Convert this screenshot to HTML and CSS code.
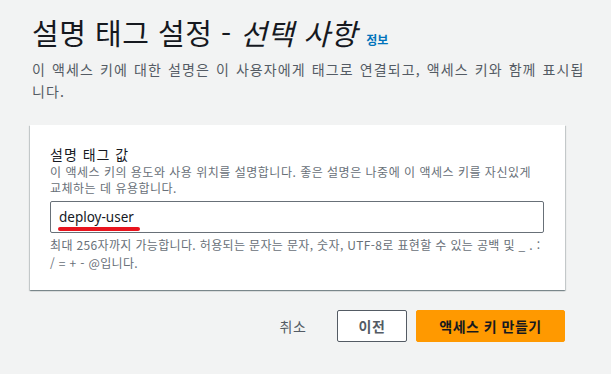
FILE: index.html
```html
<!DOCTYPE html>
<html lang="ko">
<head>
    <meta charset="UTF-8">
    <meta name="viewport" content="width=device-width, initial-scale=1.0">
    <title>설명 태그 설정</title>
    <link rel="stylesheet" href="styles.css">
</head>
<body>
    <div class="page">
        <h1 class="title">설명 태그 설정 - <em>선택 사항</em> <a href="#" class="info">정보</a></h1>
        <p class="intro">이 액세스 키에 대한 설명은 이 사용자에게 태그로 연결되고, 액세스 키와 함께 표시됩니다.</p>

        <div class="card">
            <label class="field-label" for="tag">설명 태그 값</label>
            <p class="field-desc">이 액세스 키의 용도와 사용 위치를 설명합니다. 좋은 설명은 나중에 이 액세스 키를 자신있게 교체하는 데 유용합니다.</p>
            <div class="input-wrap">
                <input id="tag" class="input" type="text" value="deploy-user">
                <span class="mark"></span>
            </div>
            <p class="field-hint">최대 256자까지 가능합니다. 허용되는 문자는 문자, 숫자, UTF-8로 표현할 수 있는 공백 및 _ . : / = + - @입니다.</p>
        </div>

        <div class="actions">
            <button class="btn btn-link">취소</button>
            <button class="btn btn-normal">이전</button>
            <button class="btn btn-primary">액세스 키 만들기</button>
        </div>
    </div>
</body>
</html>
```

FILE: styles.css
```css
body {
    margin: 0;
    background-color: #f2f3f3;
    font-family: "Noto Sans CJK KR", "Noto Sans", sans-serif;
    color: #16191f;
}
.page {
    width: 535px;
    padding: 14px 0 0 30px;
}
.title {
    margin: 0 0 0 2px;
    font-size: 29px;
    line-height: 36px;
    font-weight: 400;
    letter-spacing: 0.5px;
}
.title em {
    font-style: italic;
}
.info {
    font-size: 12px;
    font-weight: 700;
    color: #0073bb;
    text-decoration: none;
    letter-spacing: 0;
}
.intro {
    margin: 0 0 23px 2px;
    width: 556px;
    font-size: 14px;
    line-height: 22px;
    letter-spacing: 1.1px;
    word-spacing: 1px;
    color: #545b64;
}
.card {
    background: white;
    padding: 19px 21px 18px 20px;
    box-shadow: 0 1px 1px 0 rgba(0, 28, 36, 0.3), 1px 1px 1px 0 rgba(0, 28, 36, 0.15), -1px 1px 1px 0 rgba(0, 28, 36, 0.15);
}
.field-label {
    display: block;
    font-size: 14px;
    line-height: 20px;
    letter-spacing: 1px;
}
.field-desc,
.field-hint {
    margin: 0;
    font-size: 12px;
    line-height: 16px;
    letter-spacing: 0.5px;
    color: #687078;
}
.field-hint {
    margin-top: 3px;
    line-height: 18px;
    letter-spacing: 0.35px;
}
.input-wrap {
    position: relative;
    margin-top: 5px;
}
.input {
    display: block;
    box-sizing: border-box;
    width: 100%;
    height: 32px;
    padding: 0 8px;
    border: 1px solid #687078;
    border-radius: 2px;
    font-family: "Noto Sans", sans-serif;
    font-size: 13.5px;
    color: #16191f;
}
.mark {
    position: absolute;
    left: 8px;
    top: 26px;
    width: 82px;
    height: 4px;
    border-radius: 2px;
    background: #e8141e;
}
.actions {
    display: flex;
    justify-content: flex-end;
    gap: 9px;
    margin-top: 20px;
}
.btn {
    height: 32px;
    border-radius: 2px;
    font-family: inherit;
    font-size: 14px;
    font-weight: 700;
    letter-spacing: 0.5px;
    cursor: pointer;
}
.btn-link {
    width: 70px;
    border: none;
    background: none;
    color: #545b64;
    font-weight: 400;
}
.btn-normal {
    width: 70px;
    border: 1px solid #545b64;
    background: white;
    color: #545b64;
}
.btn-primary {
    width: 149px;
    border: 1px solid #ff9900;
    background: #ff9900;
    color: #16191f;
}
```
